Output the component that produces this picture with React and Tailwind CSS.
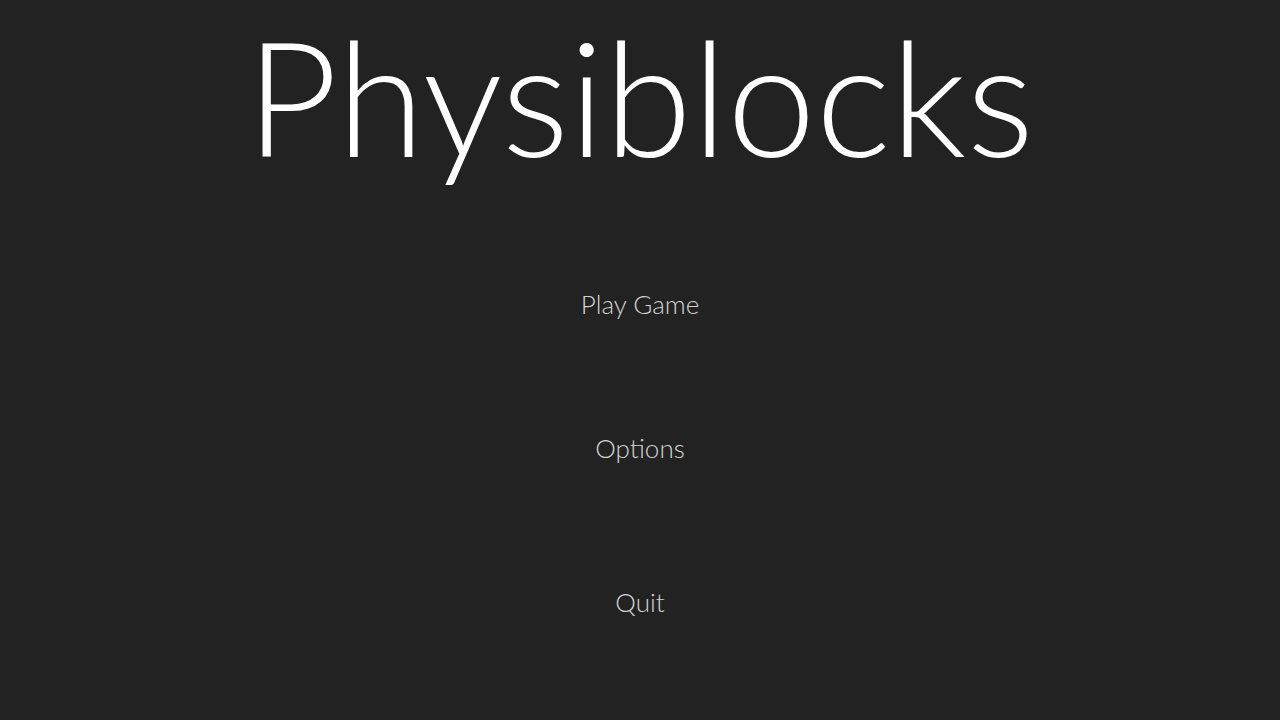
export default function App() {
  const font = { fontFamily: "Lato, 'Noto Sans', sans-serif" };
  return (
    <div className="h-screen w-full bg-[#222222] flex flex-col items-center" style={font}>
      <h1 className="text-[159px] font-light leading-[192px] text-white">Physiblocks</h1>
      <nav className="flex flex-col items-center mt-[95px]">
        <button className="text-[26px] font-light leading-[34px] text-[#d2d2d2]">Play Game</button>
        <button className="text-[26px] font-light leading-[34px] text-[#d2d2d2] mt-[110px]">Options</button>
        <button className="text-[26px] font-light leading-[34px] text-[#d2d2d2] mt-[120px]">Quit</button>
      </nav>
    </div>
  );
}
